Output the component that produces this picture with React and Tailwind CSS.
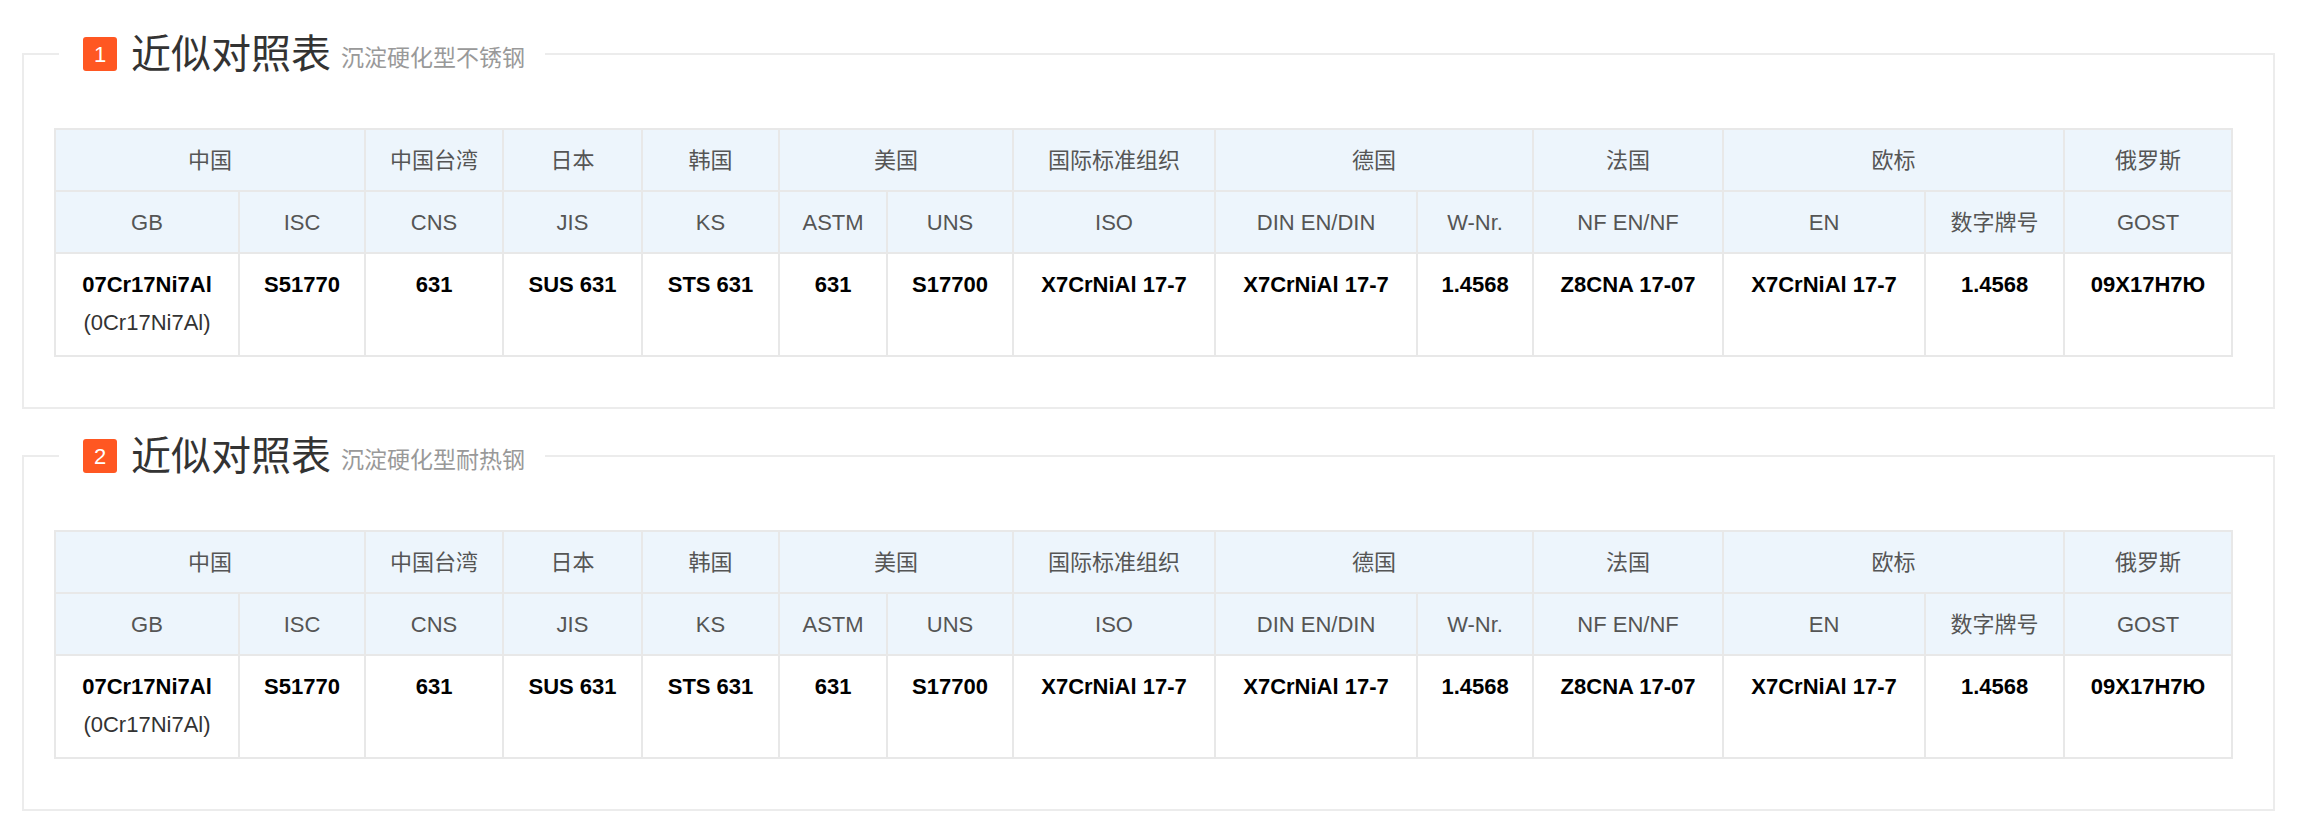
const widths = [184,126,138,139,137,108,126,202,202,116,190,202,139,168];
const top = [["中国",2],["中国台湾",1],["日本",1],["韩国",1],["美国",2],["国际标准组织",1],["德国",2],["法国",1],["欧标",2],["俄罗斯",1]];
const sub = ["GB","ISC","CNS","JIS","KS","ASTM","UNS","ISO","DIN EN/DIN","W-Nr.","NF EN/NF","EN","数字牌号","GOST"];
const data = ["07Cr17Ni7Al","S51770","631","SUS 631","STS 631","631","S17700","X7CrNiAl 17-7","X7CrNiAl 17-7","1.4568","Z8CNA 17-07","X7CrNiAl 17-7","1.4568","09X17H7Ю"];

function Block({ n, sub: s }) {
  return (
    <fieldset className="mx-[22px] border-2 border-[#ececec] px-[30px] pb-[50px] min-w-0">
      <legend className="ml-[5px] px-[24px] h-[44px] flex items-center pr-[20px]">
        <span className="w-[34px] h-[34px] bg-[#ff5722] rounded-[3px] text-white text-[22px] flex items-center justify-center">{n}</span>
        <span className="ml-[14px] text-[40px] text-[#333] leading-none">近似对照表</span>
        <span className="ml-[10px] mt-[8px] text-[23px] text-[#999] leading-none">{s}</span>
      </legend>
      <table className="mt-[52px] border-collapse table-fixed" style={{ width: 2177 }}>
        <colgroup>{widths.map((w, i) => <col key={i} style={{ width: w }} />)}</colgroup>
        <tbody>
          <tr className="bg-[#edf5fc] h-[62px]">
            {top.map(([t, c], i) => <td key={i} colSpan={c} className="border-2 border-[#e8e8e8] text-center text-[22px] text-[#555]">{t}</td>)}
          </tr>
          <tr className="bg-[#edf5fc] h-[62px]">
            {sub.map((t, i) => <td key={i} className="border-2 border-[#e8e8e8] text-center text-[22px] text-[#555]">{t}</td>)}
          </tr>
          <tr className="h-[103px]">
            {data.map((t, i) => (
              <td key={i} className="border-2 border-[#e8e8e8] text-center align-top pt-[12px] text-[22px] leading-[38px]">
                <div className="font-bold text-black">{t}</div>
                {i === 0 && <div className="text-[#333]">(0Cr17Ni7Al)</div>}
              </td>
            ))}
          </tr>
        </tbody>
      </table>
    </fieldset>
  );
}

export default function App() {
  return (
    <div className="bg-white w-[2297px] h-[825px] pt-[32px]" style={{ fontFamily: '"Liberation Sans", "Noto Sans CJK SC", sans-serif' }}>
      <Block n="1" sub="沉淀硬化型不锈钢" />
      <div className="h-[25px]" />
      <Block n="2" sub="沉淀硬化型耐热钢" />
    </div>
  );
}
